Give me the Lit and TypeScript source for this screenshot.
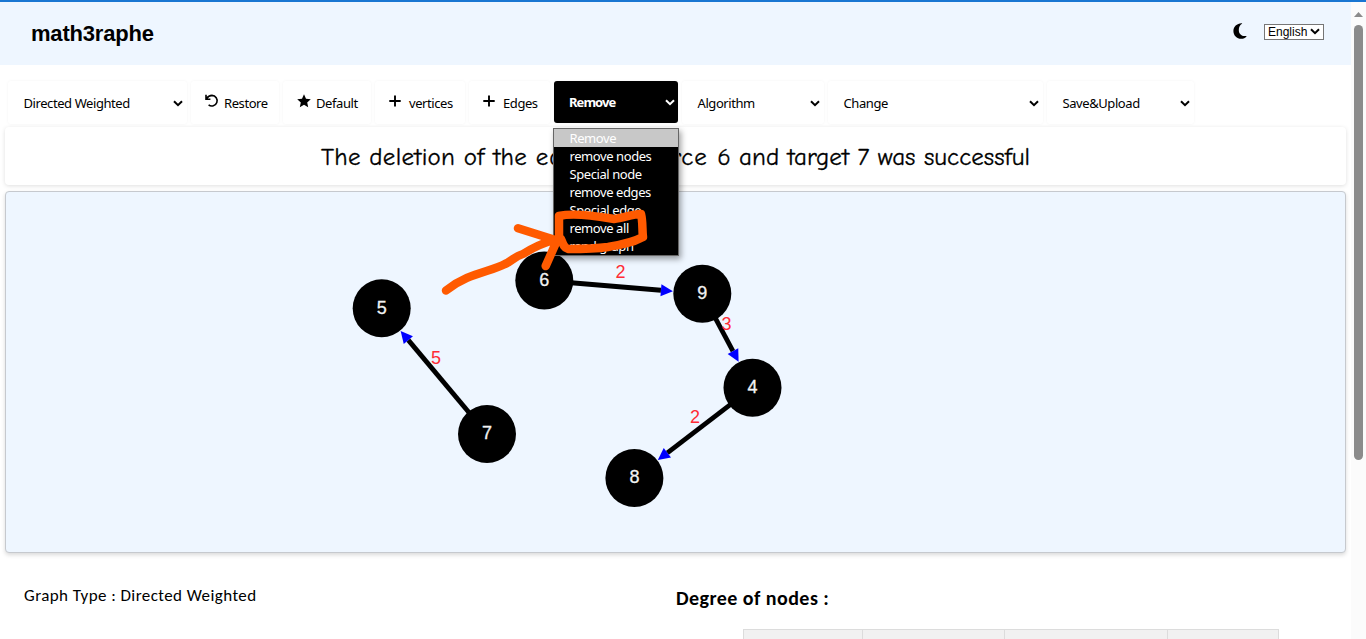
import { LitElement, html, svg, css } from "lit";
import { customElement } from "lit/decorators.js";

const nodes = [
  { id: "6", x: 544.3, y: 280.5 },
  { id: "9", x: 702.3, y: 293.7 },
  { id: "5", x: 381.7, y: 308.3 },
  { id: "4", x: 752.5, y: 387.7 },
  { id: "7", x: 487, y: 434 },
  { id: "8", x: 634.4, y: 478 },
];

const edges = [
  { from: "6", to: "9", weight: "2", lx: 620.5, ly: 278 },
  { from: "9", to: "4", weight: "3", lx: 726.5, ly: 329.5 },
  { from: "4", to: "8", weight: "2", lx: 695, ly: 423 },
  { from: "7", to: "5", weight: "5", lx: 436, ly: 364 },
];

const options = ["Remove", "remove nodes", "Special node", "remove edges", "Special edge", "remove all", "rand graph"];

const chevron = html`<svg class="chev" width="10" height="7" viewBox="0 0 10 7"><path d="M1 1.2 5 5.2 9 1.2" fill="none" stroke="currentColor" stroke-width="2"/></svg>`;

const restoreIcon = html`<svg class="ico restore" width="14" height="14" viewBox="0 0 14 14"><path d="M1 .8V5.2H5.4M1.4 4.8C3 2.4 4.8 1.4 7 1.4A5.3 5.3 0 1 1 3.6 10.9" fill="none" stroke="#000" stroke-width="1.6"/></svg>`;
const starIcon = html`<svg class="ico star" width="14" height="14" viewBox="0 0 14 14"><path d="M7 .3 9 4.7 13.8 5.2 10.2 8.4 11.2 13.2 7 10.8 2.8 13.2 3.8 8.4.2 5.2 5 4.7Z"/></svg>`;
const plusIcon = html`<svg class="ico plus" width="12" height="12" viewBox="0 0 12 12"><path d="M6 .4V11.6M.3 6H11.7" stroke="#000" stroke-width="1.9"/></svg>`;

@customElement("app-root")
export class AppRoot extends LitElement {
  static styles = css`
    :host { display: block; position: relative; height: 639px; overflow: hidden; background: #fff; color: #000; font-family: "Noto Sans", "Open Sans", sans-serif; }
    * { box-sizing: border-box; }
    svg { display: block; flex: none; }
    .topline { height: 2px; background: #1976d2; }
    .shell { display: flex; height: 637px; }
    .page { width: 1351px; flex: none; }
    .header { height: 63px; background: #eef6ff; display: flex; align-items: center; padding: 0 27px 0 31px; }
    .brand { flex: 1; font: bold 22px/26px "Liberation Sans", sans-serif; letter-spacing: -.2px; }
    .moon { margin: -6px 17px 0 0; }
    .lang { width: 60px; height: 16px; margin-top: -4px; background: #fff; border: 1px solid #767676; display: flex; align-items: center; justify-content: space-between; padding: 0 3px; font: 12px/14px "Liberation Sans", sans-serif; }
    .tools { display: flex; height: 62px; padding: 16px 0 0 8px; gap: 4px; }
    .tool { height: 43px; flex: none; border-radius: 3px; box-shadow: 0 0 3px rgba(0,0,0,.05); display: flex; align-items: center; padding: 1px 4px 0 15.500px; font-size: 13px; letter-spacing: -.42px; white-space: nowrap; }
    .tool .label { flex: 1; }
    .tool.btn { padding-left: 14px; }
    .restore { margin: -4px 5px 0 0; }
    .star { margin: -4px 5px 0 0; }
    .plus { margin: -4px 8px 0 0; }
    .tool.open { background: #000; color: #fff; font-weight: 700; height: 42px; padding: 0 3px 0 15px; }
    .tool.open .label { letter-spacing: -.95px; }
    .status { height: 58px; margin: 0 5px 6px; border-radius: 4px; box-shadow: 0 1px 4px rgba(0,0,0,.13); text-align: center; font: 25px/60px "Comic Sans MS", "Comic Neue", "Open Sans", sans-serif; white-space: nowrap; letter-spacing: .28px; -webkit-text-stroke: .3px #000; }
    .subject { letter-spacing: .98px; }
    .outcome { letter-spacing: .02px; }
    .graph { height: 362px; margin: 0 5px; border: 1px solid #c6c9ce; border-radius: 4px; background: #eef6ff; box-shadow: 0 2px 4px rgba(0,0,0,.15); overflow: hidden; }
    .node-label { font: 18px "Liberation Sans", sans-serif; fill: #f2f2f2; stroke: #f2f2f2; stroke-width: .3; text-anchor: middle; }
    .weight { font: 18px "Liberation Sans", sans-serif; fill: #ff2b35; text-anchor: middle; }
    .info { display: flex; padding-top: 28px; }
    .type { width: 652px; margin-left: 24px; padding-top: 1px; font: 17px/28px Carlito, Lato, sans-serif; letter-spacing: .42px; }
    .degree { flex: 1; }
    .degree-title { margin: 0; font: bold 20px/32px Carlito, "Open Sans", sans-serif; letter-spacing: .45px; padding-top: 1px; }
    .table { display: grid; grid-template-columns: 119px 142px 163px 111px; width: 536px; margin: 15px 0 0 67px; height: 30px; border-left: 1px solid #dcdcdc; border-top: 1px solid #dcdcdc; }
    .cell { background: #f1f1f1; border-right: 1px solid #dcdcdc; }
    .scroll { width: 15px; background: #fbfbfb; display: flex; flex-direction: column; align-items: center; padding-top: 10px; }
    .thumb { width: 9px; height: 435px; margin-top: 8px; border-radius: 5px; background: #8b8b8b; }
    .menu { position: absolute; left: 553px; top: 128px; width: 126px; height: 128px; background: #000; border: 1px solid #666; box-shadow: 2px 3px 6px rgba(0,0,0,.38); color: #fff; overflow: hidden; font-size: 13px; letter-spacing: -.42px; }
    .option { height: 18px; line-height: 18px; padding-left: 15.5px; white-space: nowrap; }
    .option.current { background: #c8c8c8; }
    .mark { position: absolute; left: 430px; top: 200px; }
  `;

  private edge(e: (typeof edges)[number]) {
    const a = nodes.find((n) => n.id === e.from)!;
    const b = nodes.find((n) => n.id === e.to)!;
    const len = Math.hypot(b.x - a.x, b.y - a.y);
    const ux = (b.x - a.x) / len;
    const uy = (b.y - a.y) / len;
    const tx = b.x - ux * 29.5;
    const ty = b.y - uy * 29.5;
    const bx = tx - ux * 12;
    const by = ty - uy * 12;
    return svg`
      <line x1=${a.x} y1=${a.y} x2=${bx} y2=${by} stroke="#000" stroke-width="4.8"/>
      <polygon fill="#00f" points="${tx},${ty} ${bx - uy * 6},${by + ux * 6} ${bx + uy * 6},${by - ux * 6}"/>
      <text class="weight" x=${e.lx} y=${e.ly}>${e.weight}</text>`;
  }

  private select(label: string, width: number, open = false) {
    return html`<div class="tool ${open ? "open" : ""}" style="width:${width}px"><span class="label">${label}</span>${chevron}</div>`;
  }

  private button(icon: unknown, label: string, width: number) {
    return html`<div class="tool btn" style="width:${width}px">${icon}<span class="label">${label}</span></div>`;
  }

  render() {
    return html`
      <div class="topline"></div>
      <div class="shell">
        <div class="page">
          <header class="header">
            <div class="brand">math3raphe</div>
            <svg class="moon" width="14" height="16" viewBox="0 0 14 16"><path d="M8.6.2C3.8.3.4 3.8.4 8c0 4.400 3.400 7.800 7.800 7.800 2.200 0 4.100-.9 5.300-2.400.2-.3 0-.5-.3-.5C8.600 13.600 5.800 10.800 5.800 6.900c0-2.600 1.200-4.900 3.200-6.100.3-.2.200-.6-.4-.6Z"/></svg>
            <div class="lang"><span>English</span>${chevron}</div>
          </header>
          <div class="tools">
            ${this.select("Directed Weighted", 179)}
            ${this.button(restoreIcon, "Restore", 88)}
            ${this.button(starIcon, "Default", 88)}
            ${this.button(plusIcon, "vertices", 90)}
            ${this.button(plusIcon, "Edges", 81)}
            ${this.select("Remove", 124, true)}
            ${this.select("Algorithm", 142)}
            ${this.select("Change", 215)}
            ${this.select("Save&Upload", 147)}
          </div>
          <div class="status">The deletion of the <span class="subject">edge of source </span><span class="outcome">6 and target 7 was successful</span></div>
          <div class="graph">
            <svg width="1339" height="360" viewBox="6 192 1339 360">
              ${edges.map((e) => this.edge(e))}
              ${nodes.map((n) => svg`<circle cx=${n.x} cy=${n.y} r="29"/><text class="node-label" x=${n.x} y=${n.y + 5.2}>${n.id}</text>`)}
            </svg>
          </div>
          <div class="info">
            <div class="type">Graph Type : Directed Weighted</div>
            <div class="degree">
              <h3 class="degree-title">Degree of nodes :</h3>
              <div class="table"><div class="cell"></div><div class="cell"></div><div class="cell"></div><div class="cell"></div></div>
            </div>
          </div>
        </div>
        <div class="scroll">
          <svg width="9" height="5" viewBox="0 0 9 5"><path d="M4.500 0 9 5H0Z" fill="#8b8b8b"/></svg>
          <div class="thumb"></div>
        </div>
      </div>
      <div class="menu">${options.map((o, i) => html`<div class="option ${i === 0 ? "current" : ""}">${o}</div>`)}</div>
      <svg class="mark" width="230" height="100" viewBox="430 200 230 100" fill="none" stroke="#ff5a00" stroke-width="8.500" stroke-linecap="round" stroke-linejoin="round">
        <path d="M446 290.500C468 273 490 272 505 264C512 261 515 256 523 254C534 247 543 243 554 240M518 228.300 557 240.500 545.700 266"/>
        <path d="M559 240 559 216C576 212 602 217 614 219C624 218 632 214 641 214C643 222 642 230 643 237C632 243 620 245 608 247C594 249 580 249 568 249C564 248 563 244 561 239"/>
      </svg>`;
  }
}
